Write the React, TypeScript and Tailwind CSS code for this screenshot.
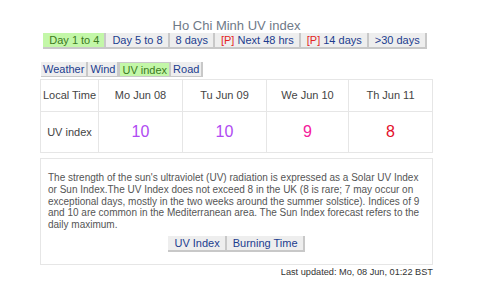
import React from 'react'

const navButtons = [
  { label: 'Day 1 to 4', active: true },
  { label: 'Day 5 to 8' },
  { label: '8 days' },
  { label: 'Next 48 hrs', p: true },
  { label: '14 days', p: true },
  { label: '>30 days' },
]

const tabs = ['Weather', 'Wind', 'UV index', 'Road']

const days = [
  { day: 'Mo Jun 08', uv: '10', color: 'text-[#b04af2]' },
  { day: 'Tu Jun 09', uv: '10', color: 'text-[#b04af2]' },
  { day: 'We Jun 10', uv: '9', color: 'text-[#f4209c]' },
  { day: 'Th Jun 11', uv: '8', color: 'text-[#e3102c]' },
]

const App = () => {
  return (
    <div className="w-[480px] h-[285px] bg-white font-['Liberation_Sans',Arial,sans-serif] overflow-hidden">
      <div className="ml-[40px] w-[393px] pt-[18px]">
        <h1 className="text-center text-[13px] leading-[15px] text-[#707a88]">Ho Chi Minh UV index</h1>
        <div className="flex justify-center ml-[-3px]">
          {navButtons.map((b) => (
            <span
              key={b.label}
              className={`whitespace-nowrap pl-[6px] pr-[5px] h-[16px] leading-[15px] text-[11px] border-r-2 border-b-2 border-[#c8c8c8] ${
                b.active ? 'bg-[#c3f7a8] text-[#3c7a22]' : 'bg-[#eeeeee] text-[#1c3d8e]'
              }`}
            >
              {b.p && <span className="text-[#e42424]">[P] </span>}
              {b.label}
            </span>
          ))}
        </div>
        <div className="flex mt-[13px] ml-[1px]">
          {tabs.map((t) => (
            <span
              key={t}
              className={`whitespace-nowrap px-[2px] h-[15px] leading-[14px] text-[11px] border-r-2 border-b border-[#c8c8c8] ${
                t === 'UV index' ? 'bg-[#c3f7a8] text-[#3c7a22] border-t border-l' : 'bg-[#eeeeee] text-[#1c3d8e]'
              }`}
            >
              {t}
            </span>
          ))}
        </div>
        <div className="mt-[2px] border border-[#e6e6e6] grid grid-cols-[58px_84px_84px_82px_1fr] text-[#444] text-[11px]">
          <div className="h-[32px] flex items-center justify-center whitespace-nowrap border-r border-b border-[#e6e6e6]">Local Time</div>
          {days.map((d, i) => (
            <div
              key={d.day}
              className={`h-[32px] flex items-center justify-center border-b border-[#e6e6e6] ${i < 3 ? 'border-r' : ''}`}
            >
              {d.day}
            </div>
          ))}
          <div className="h-[40px] flex items-center justify-center border-r border-[#e6e6e6]">UV index</div>
          {days.map((d, i) => (
            <div
              key={d.day + 'uv'}
              className={`h-[40px] flex items-center justify-center text-[16px] border-[#e6e6e6] ${d.color} ${i < 3 ? 'border-r' : ''}`}
            >
              {d.uv}
            </div>
          ))}
        </div>
        <div className="mt-[5px] border border-[#e6e6e6] px-[7px] pt-[13px] pb-[12px]">
          <p className="text-[10px] leading-[11.75px] text-[#555]">
            The strength of the sun's ultraviolet (UV) radiation is expressed as a Solar UV Index or Sun Index.The UV
            Index does not exceed 8 in the UK (8 is rare; 7 may occur on exceptional days, mostly in the two weeks around
            the summer solstice). Indices of 9 and 10 are common in the Mediterranean area. The Sun Index forecast refers
            to the daily maximum.
          </p>
          <div className="flex justify-center mt-[5px]">
            <span className="whitespace-nowrap pl-[6px] pr-[5px] h-[16px] leading-[15px] text-[11px] bg-[#eeeeee] text-[#1c3d8e] border-r-2 border-b-2 border-[#c8c8c8]">
              UV Index
            </span>
            <span className="whitespace-nowrap pl-[6px] pr-[5px] h-[16px] leading-[15px] text-[11px] bg-[#eeeeee] text-[#1c3d8e] border-r-2 border-b-2 border-[#c8c8c8]">
              Burning Time
            </span>
          </div>
        </div>
        <div className="text-right text-[9.2px] leading-[12px] text-[#333] mt-[1px]">Last updated: Mo, 08 Jun, 01:22 BST</div>
      </div>
    </div>
  )
}

export default App
